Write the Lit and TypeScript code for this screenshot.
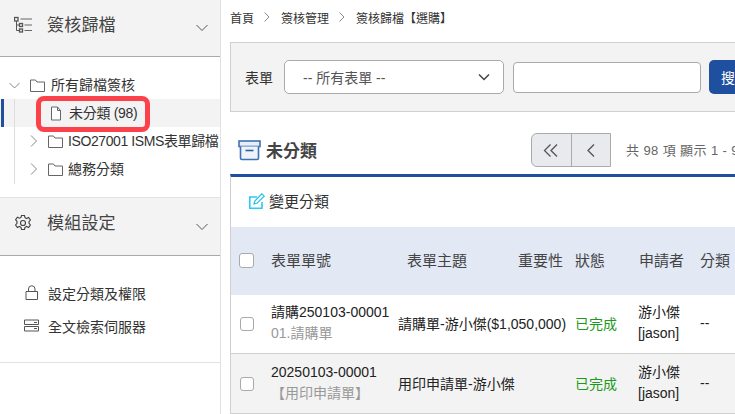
import { LitElement, html, css, svg } from "lit";
import { customElement } from "lit/decorators.js";

const chevronDown = html`<svg class="chev" width="14" height="8" viewBox="0 0 14 8"><path d="M1.500 1 7 6.500 12.500 1" fill="none" stroke="#555" stroke-width="1"/></svg>`;
const folder = html`<svg width="15" height="13" viewBox="0 0 15 13"><path d="M.5 1h5l1.500 2h7.500v9.500H.5z" fill="#fff" stroke="#666" stroke-width="1"/></svg>`;
const right = html`<svg width="7" height="12" viewBox="0 0 7 12"><path d="M1 .5 6.500 6 1 11.500" fill="none" stroke="#888" stroke-width="1"/></svg>`;
const cols = ["表單單號", "表單主題", "重要性", "狀態", "申請者", "分類"];

@customElement("app-root")
export class AppRoot extends LitElement {
  static styles = css`
    :host { display: block; width: 735px; height: 414px; overflow: hidden; background: #fff;
      font-family: "Liberation Sans", "Noto Sans CJK TC", sans-serif; color: #333; }
    svg { flex: none; }
    .page { display: flex; width: 735px; height: 414px; overflow: hidden; }
    .side { width: 220px; flex: none; border-right: 1px solid #e2e2e2; height: 414px; }
    .side-box { border-bottom: 1px solid #e2e2e2; }
    .head { background: #f3f3f3; border-bottom: 1px solid #a9a9a9; display: flex; align-items: center; padding: 0 11px 8px 14px; box-sizing: content-box; height: 48px; }
    .head.second { height: 49px; }
    .head .title { font-size: 17px; letter-spacing: .2px; margin: 0 0 2px 15px; flex: 1; color: #444; }
    .head .chev { margin-top: 8px; }
    .tree { height: 140px; padding-top: 14px; box-sizing: border-box; font-size: 14px; }
    .node { display: flex; align-items: center; height: 28px; }
    .node span { margin-bottom: 2px; }
    .root { padding-left: 9px; }
    .root svg:first-child { margin-right: 10px; }
    .root span { margin-left: 6px; }
    .sel { background: #f3f3f3; position: relative; padding-left: 50px; gap: 7px; letter-spacing: -.3px; }
    .sel::before { content: ""; position: absolute; left: 1px; top: 0; bottom: 0; width: 3px; background: #1f4f9f; }
    .mark { position: absolute; left: 36px; top: -3px; width: 104px; height: 26px; border: 5px solid #fb4149; border-radius: 8px; }
    .kid { padding-left: 30px; white-space: nowrap; }
    .kid svg:first-child { margin-right: 11px; }
    .kid span { margin-left: 5px; }
    .kid .tight { letter-spacing: -.4px; }
    .kids { position: relative; }
    .kids::after { content: ""; position: absolute; left: 14px; top: 0; bottom: -1px; width: 1px; background: #ddd; }
    .mods { height: 106px; padding: 20px 0 0 24px; box-sizing: border-box; font-size: 14px; }
    .mod { display: flex; align-items: center; height: 33px; }
    .mod .ic { width: 24px; display: flex; }
    .main { flex: 1; min-width: 0; padding-left: 9px; }
    .crumbs { height: 42px; box-sizing: border-box; padding-top: 9px; display: flex; align-items: flex-start; font-size: 12px; color: #333; white-space: nowrap; }
    .crumbs svg { margin: 3px 11px 0 10px; }
    .filter { height: 70px; box-sizing: border-box; border: 1px solid #d0d0d0; background: #f3f3f3; display: flex; align-items: center; padding-left: 14px; font-size: 14px; width: 520px; white-space: nowrap; }
    .select { width: 220px; height: 34px; box-sizing: border-box; margin-left: 11px; background: #fff; border: 1px solid #aaa; border-radius: 5px; display: flex; align-items: center; justify-content: space-between; padding: 0 13px 0 18px; color: #555; }
    .input { width: 188px; height: 31px; box-sizing: border-box; margin-left: 9px; background: #fff; border: 1px solid #aaa; border-radius: 4px; }
    .btn { margin-left: 8px; height: 34px; width: 40px; background: #1f4f9f; color: #fff; border-radius: 5px 0 0 5px; padding-left: 12px; box-sizing: border-box; display: flex; align-items: center; font-size: 14px; flex: none; }
    .list-head { height: 62px; box-sizing: border-box; padding: 14px 0 0 8px; display: flex; align-items: center; white-space: nowrap; }
    .list-head h2 { font-size: 17px; font-weight: bold; margin: 0 0 2px 5px; color: #444; width: 265px; flex: none; }
    .pager { display: flex; width: 80px; height: 34px; box-sizing: border-box; border: 1px solid #aaa; border-radius: 6px 0 0 6px; background: #e8eaed; flex: none; }
    .pager div { flex: 1; display: flex; align-items: center; justify-content: center; }
    .pager div + div { border-left: 1px solid #aaa; }
    .count { margin: 0 0 2px 15px; font-size: 13px; letter-spacing: .4px; color: #666; }
    .panel { border-top: 3px solid #1f4f9f; border-left: 1px solid #d0d0d0; }
    .tools { height: 50px; box-sizing: border-box; padding: 0 0 2px 18px; display: flex; align-items: center; gap: 4px; font-size: 15px; color: #333; }
    .tools span { margin-bottom: 2px; }
    .row { display: grid; grid-template-columns: 40px 128px 119px 57px 64px 61px 1fr; align-items: center; box-sizing: border-box; }
    .th { height: 68px; background: #e2e8f4; font-size: 15px; color: #444; padding-bottom: 4px; }
    .td { height: 59px; border-bottom: 1px solid #d0d0d0; font-size: 14px; color: #222; padding-bottom: 2px; }
    .td.alt { background: #f3f3f3; height: 60px; }
    .box { width: 14px; height: 14px; box-sizing: border-box; border: 1px solid #aaa; border-radius: 3px; background: #fff; margin: 2px 0 0 9px; }
    .th .box { width: 15px; height: 15px; margin: 3px 0 0 8px; }
    .sub { color: #999; }
    .no { line-height: 21px; white-space: nowrap; }
    .no > div:first-child, .user { color: #222; }
    .subj { grid-column: span 2; white-space: nowrap; margin-left: -1px; }
    .hs { padding-left: 8px; }
    .ok { color: #1c9a1c; }
    .user { line-height: 21px; white-space: nowrap; margin-left: -1px; }
  `;

  render() {
    return html`<div class="page">
      <aside class="side">
        <div class="side-box">
          <div class="head">
            <svg width="18" height="17" viewBox="0 0 18 17"><g fill="none" stroke="#555"><rect x=".5" y="1.500" width="3.500" height="3.500" stroke-width="1.300"/><path d="M2.500 5v9.500M2.500 9h3M2.500 14.500h3"/><rect x="5.500" y="7.500" width="3" height="3" stroke-width="1.300"/><rect x="5.500" y="13" width="3" height="3" stroke-width="1.300"/><path d="M6.500 3H18M10.500 9H18M10.500 14.500H18" stroke="#666" stroke-width="1.200"/></g></svg>
            <span class="title">簽核歸檔</span>${chevronDown}
          </div>
          <div class="tree">
            <div class="node root">
              <svg width="11" height="7" viewBox="0 0 11 7"><path d="M.5 1 5.500 6 10.500 1" fill="none" stroke="#888"/></svg>
              ${folder}<span>所有歸檔簽核</span>
            </div>
            <div class="kids">
              <div class="node sel">
                <svg width="12" height="15" viewBox="0 0 12 15"><path d="M1.500 1h6l3 3.500v9.500h-9z M7.500 1v3.500h3" fill="#fff" stroke="#666"/></svg>
                <span>未分類 (98)</span>
                <div class="mark"></div>
              </div>
              <div class="node kid">${right}${folder}<span class="tight">ISO27001 ISMS表單歸檔</span></div>
              <div class="node kid">${right}${folder}<span>總務分類</span></div>
            </div>
          </div>
        </div>
        <div class="side-box">
          <div class="head second">
            <svg width="18" height="18" viewBox="0 0 18 18"><g fill="none" stroke="#444" stroke-width="1.150"><circle cx="9" cy="9" r="2.500"/><path d="M7.500 1.500h3l.5 2.200 1.600.8 2-1 1.800 2.500-1.400 1.700v1.600l1.400 1.700-1.800 2.500-2-1-1.600.8-.5 2.200h-3l-.5-2.200-1.600-.8-2 1-1.800-2.500 1.400-1.700V7.400L1.600 5.700 3.400 3.200l2 1 1.600-.8z"/></g></svg>
            <span class="title">模組設定</span>${chevronDown}
          </div>
          <div class="mods">
            <div class="mod"><span class="ic"><svg width="15" height="15" viewBox="0 0 15 15"><path d="M2 6.500h11.500v8H2zM4.500 6.500V4a3.250 3.250 0 0 1 6.500 0v2.500" fill="none" stroke="#555"/></svg></span><span>設定分類及權限</span></div>
            <div class="mod"><span class="ic"><svg width="15" height="13" viewBox="0 0 15 13"><path d="M.5 1h14v4.500H.5zM.5 7.500h14V12H.5z" fill="none" stroke="#555"/><path d="M10 3.500h3M10 9.500h3" stroke="#555"/></svg></span><span>全文檢索伺服器</span></div>
          </div>
        </div>
      </aside>
      <main class="main">
        <div class="crumbs">
          <span>首頁</span>${this.crumbSep()}<span>簽核管理</span>${this.crumbSep()}<span>簽核歸檔【選購】</span>
        </div>
        <div class="filter">
          <span>表單</span>
          <div class="select"><span>-- 所有表單 --</span><svg width="12" height="8" viewBox="0 0 12 8"><path d="M1 1.500 6 6.500 11 1.500" fill="none" stroke="#444" stroke-width="1.500"/></svg></div>
          <div class="input"></div>
          <div class="btn">搜</div>
        </div>
        <div class="list-head">
          <svg width="23" height="21" viewBox="0 0 23 21"><rect x="1" y="1" width="21" height="5.500" fill="#e8eef8" stroke="#3f6fb5" stroke-width="1.600"/><path d="M2.500 6.500V18a1.500 1.500 0 0 0 1.500 1.500h15a1.500 1.500 0 0 0 1.500-1.500V6.500" fill="#eef2f9" stroke="#3f6fb5" stroke-width="1.600"/><path d="M7.500 10.500h8" stroke="#2f5fa8" stroke-width="1.600"/></svg>
          <h2>未分類</h2>
          <div class="pager">
            <div><svg width="16" height="13" viewBox="0 0 16 13"><path d="M7.500 .5 1.500 6.500 7.500 12.500M14 .5 8 6.500 14 12.500" fill="none" stroke="#555" stroke-width="1.300"/></svg></div>
            <div><svg width="10" height="13" viewBox="0 0 10 13"><path d="M8 .5 2 6.500 8 12.500" fill="none" stroke="#555" stroke-width="1.300"/></svg></div>
          </div>
          <span class="count">共 98 項 顯示 1 - 98</span>
        </div>
        <div class="panel">
          <div class="tools">
            <svg width="16" height="16" viewBox="0 0 16 16"><path d="M8 4H.8v11.200H13V9" fill="none" stroke="#2ccbf2" stroke-width="1.600"/><path d="M5 11l.8-3L12.800 .8l2.400 2.400L8 10.300z" fill="none" stroke="#26bfe8" stroke-width="1.200"/></svg>
            <span>變更分類</span>
          </div>
          <div class="row th">
            <div class="box"></div>
            ${cols.map((c, i) => html`<div class=${i === 1 ? "hs" : ""}>${c}</div>`)}
          </div>
          <div class="row td">
            <div class="box"></div>
            <div class="no"><div>請購250103-00001</div><div class="sub">01.請購單</div></div>
            <div class="subj">請購單-游小傑($1,050,000)</div>
            <div class="ok">已完成</div>
            <div class="user">游小傑<br />[jason]</div>
            <div>--</div>
          </div>
          <div class="row td alt">
            <div class="box"></div>
            <div class="no"><div>20250103-00001</div><div class="sub">【用印申請單】</div></div>
            <div class="subj">用印申請單-游小傑</div>
            <div class="ok">已完成</div>
            <div class="user">游小傑<br />[jason]</div>
            <div>--</div>
          </div>
        </div>
      </main>
    </div>`;
  }

  crumbSep() {
    return svg`<svg width="6" height="10" viewBox="0 0 6 10"><path d="M.5 .5 5 5 .5 9.500" fill="none" stroke="#888"/></svg>`;
  }
}
